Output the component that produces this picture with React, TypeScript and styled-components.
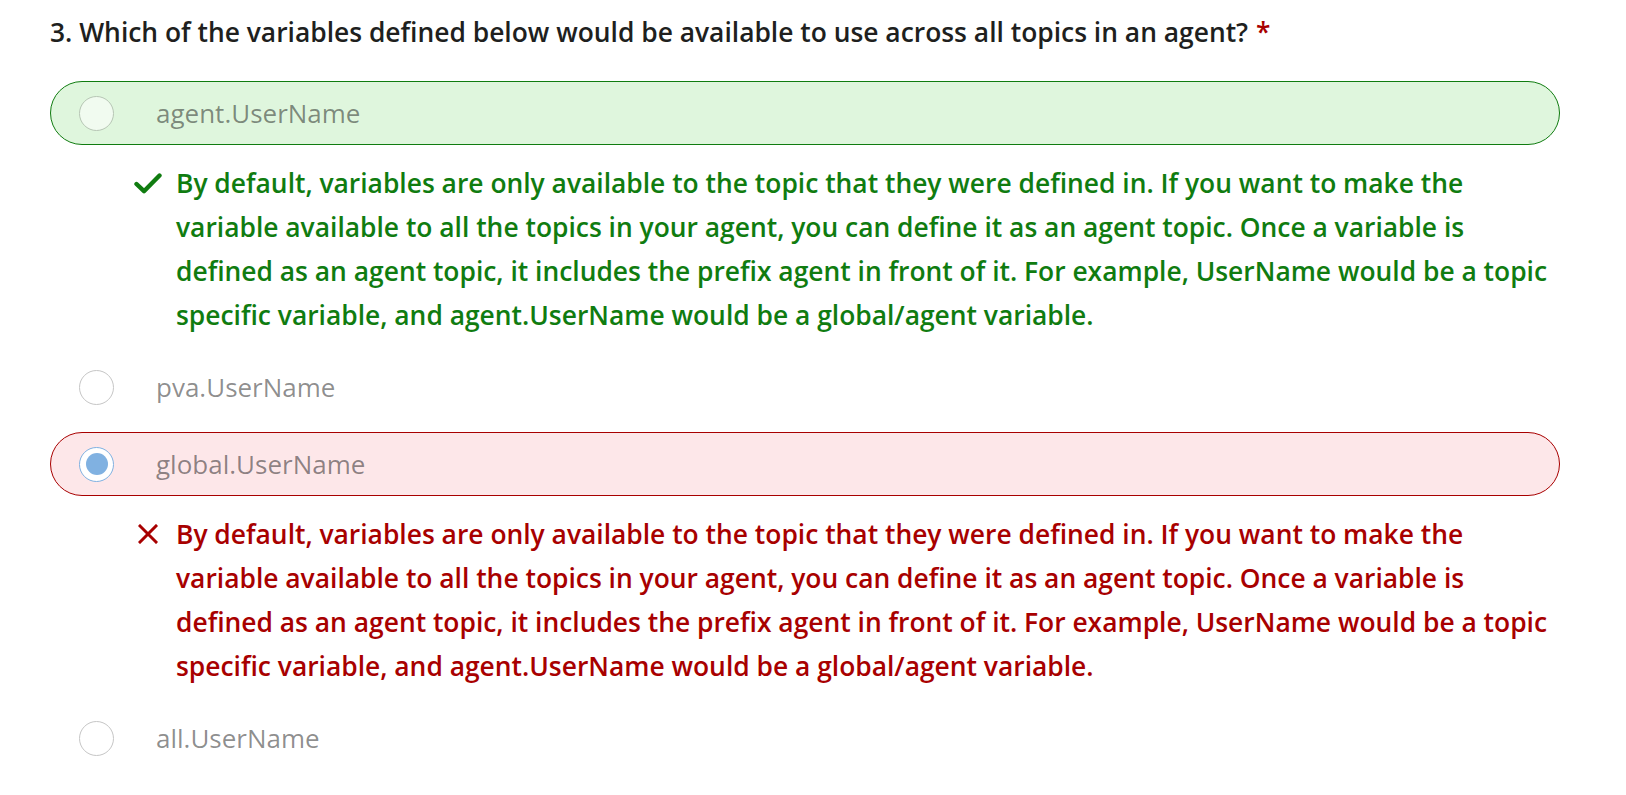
import React from "react";
import styled, { createGlobalStyle, css } from "styled-components";

const GlobalStyle = createGlobalStyle`
  html, body { margin: 0; padding: 0; background: #ffffff; }
  body { font-family: "Open Sans", "Noto Sans", "Liberation Sans", sans-serif; }
`;

type Status = "correct" | "wrong" | "none";

const palette = {
  correct: { bg: "#dff6dd", border: "#107c10", text: "#107c10" },
  wrong: { bg: "#fde7e9", border: "#a80000", text: "#a80000" },
  none: { bg: "transparent", border: "transparent", text: "#323130" },
};

const Page = styled.main`
  width: 1510px;
  padding: 14px 0 0 50px;
  box-sizing: content-box;
`;

const Title = styled.h2`
  margin: 0 0 31px;
  font-size: 26.4px;
  line-height: 36px;
  font-weight: 600;
  color: #201f1e;
  white-space: nowrap;
`;

const Required = styled.span`
  color: #a80000;
  margin-left: 8px;
`;

const OptionList = styled.div`
  display: flex;
  flex-direction: column;
  gap: 13px;
`;

const OptionItem = styled.div`
  display: flex;
  flex-direction: column;
`;

const Pill = styled.div<{ $status: Status }>`
  height: 64px;
  box-sizing: border-box;
  display: flex;
  align-items: center;
  gap: 42px;
  padding-left: 28px;
  border-radius: 32px;
  border: 1px solid ${(p) => palette[p.$status].border};
  background: ${(p) => palette[p.$status].bg};
`;

const Radio = styled.span<{ $checked: boolean; $onTint: boolean }>`
  width: 35px;
  height: 35px;
  box-sizing: border-box;
  border-radius: 50%;
  flex: none;
  display: flex;
  align-items: center;
  justify-content: center;
  border: 1px solid #c6c6c6;
  background: #ffffff;
  ${(p) =>
    p.$onTint &&
    css`
      background: rgba(255, 255, 255, 0.55);
      border-color: #b7c6b5;
    `}
  ${(p) =>
    p.$checked &&
    css`
      border: 1.5px solid #80b1e1;
      background: #ffffff;
      &::after {
        content: "";
        width: 22px;
        height: 22px;
        border-radius: 50%;
        background: #80b1e1;
      }
    `}
`;

const OptionLabel = styled.span`
  font-size: 26px;
  font-weight: 400;
  color: rgba(0, 0, 0, 0.46);
  line-height: 34px;
`;

const Feedback = styled.div<{ $status: Status }>`
  display: flex;
  align-items: flex-start;
  margin: 16px 0 5px;
  padding-left: 83px;
  color: ${(p) => palette[p.$status].text};
`;

const FeedbackIcon = styled.span`
  width: 29px;
  height: 44px;
  flex: none;
  display: flex;
  align-items: center;
  justify-content: center;
  margin-right: 14px;
`;

const FeedbackText = styled.p`
  margin: 0;
  font-size: 26.4px;
  line-height: 44px;
  font-weight: 600;
  white-space: nowrap;
`;

const CheckIcon = () => (
  <svg width="28" height="21" viewBox="0 0 28 21" aria-hidden>
    <polyline
      points="2.5,11 10,18.2 25.5,2.5"
      fill="none"
      stroke="#107c10"
      strokeWidth="4.4"
      strokeLinecap="round"
      strokeLinejoin="round"
    />
  </svg>
);

const CrossIcon = () => (
  <svg width="20" height="20" viewBox="0 0 20 20" aria-hidden>
    <path d="M2 2 L18 18 M18 2 L2 18" stroke="#a80000" strokeWidth="3" strokeLinecap="square" fill="none" />
  </svg>
);

const feedbackLines = [
  "By default, variables are only available to the topic that they were defined in. If you want to make the",
  "variable available to all the topics in your agent, you can define it as an agent topic. Once a variable is",
  "defined as an agent topic, it includes the prefix agent in front of it. For example, UserName would be a topic",
  "specific variable, and agent.UserName would be a global/agent variable.",
];

type Option = { label: string; status: Status; checked: boolean };

const options: Option[] = [
  { label: "agent.UserName", status: "correct", checked: false },
  { label: "pva.UserName", status: "none", checked: false },
  { label: "global.UserName", status: "wrong", checked: true },
  { label: "all.UserName", status: "none", checked: false },
];

export default function App() {
  return (
    <>
      <GlobalStyle />
      <Page>
        <Title>
          3. Which of the variables defined below would be available to use across all topics in an agent?
          <Required>*</Required>
        </Title>
        <OptionList>
          {options.map((o) => (
            <OptionItem key={o.label}>
              <Pill $status={o.status}>
                <Radio $checked={o.checked} $onTint={o.status !== "none"} />
                <OptionLabel>{o.label}</OptionLabel>
              </Pill>
              {o.status !== "none" && (
                <Feedback $status={o.status}>
                  <FeedbackIcon>{o.status === "correct" ? <CheckIcon /> : <CrossIcon />}</FeedbackIcon>
                  <FeedbackText>
                    {feedbackLines.map((l, i) => (
                      <React.Fragment key={i}>
                        {l}
                        {i < feedbackLines.length - 1 && <br />}
                      </React.Fragment>
                    ))}
                  </FeedbackText>
                </Feedback>
              )}
            </OptionItem>
          ))}
        </OptionList>
      </Page>
    </>
  );
}
